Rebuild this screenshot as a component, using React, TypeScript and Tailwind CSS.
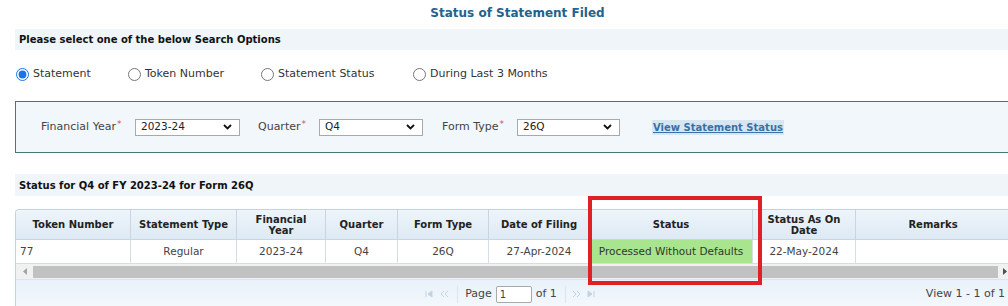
import React from "react";

function Radio({ label, checked = false, width }: { label: string; checked?: boolean; width: string }) {
  return (
    <label className={`flex items-center gap-[4px] ${width}`}>
      <input type="radio" name="opt" checked={checked} readOnly className="m-0 w-[13px] h-[13px] accent-[#1a73e8]" />
      <span className="text-[11px] text-[#333]">{label}</span>
    </label>
  );
}

function Field({ label, value, labelW, selectW }: { label: string; value: string; labelW: string; selectW: string }) {
  return (
    <>
      <div className={`flex items-center ${labelW} text-[11px] text-[#444]`}>
        {label}
        <span className="text-[9px] text-[#e24a63] self-start -mt-[1px] ml-[1px]">*</span>
      </div>
      <div className={`flex items-center justify-between ${selectW} h-[17px] border border-[#a9a9a9] bg-white pl-[5px] pr-[7px] text-[10.5px] text-[#222]`}>
        {value}
        <svg width="9" height="6" viewBox="0 0 9 6">
          <path d="M1 1 L4.5 4.5 L8 1" fill="none" stroke="#111" strokeWidth="1.8" />
        </svg>
      </div>
    </>
  );
}

const cols = "grid grid-cols-[115px_106px_89px_72px_91px_101px_163px_103px_1fr]";

const headers = ["Token Number", "Statement Type", "Financial\nYear", "Quarter", "Form Type", "Date of Filing", "Status", "Status As On\nDate", "Remarks"];

function PagerIcon({ kind }: { kind: "first" | "prev" | "next" | "last" }) {
  const d = {
    first: "M1 1 V7 M7 1 L3 4 L7 7 Z",
    prev: "M4 1 L1 4 L4 7 M8 1 L5 4 L8 7",
    next: "M1 1 L4 4 L1 7 M5 1 L8 4 L5 7",
    last: "M7 1 V7 M1 1 L5 4 L1 7 Z",
  }[kind];
  return (
    <svg width="9" height="8" viewBox="0 0 9 8">
      <path d={d} fill={kind === "first" || kind === "last" ? "#c3d2e0" : "none"} stroke="#c3d2e0" strokeWidth="1" />
    </svg>
  );
}

export default function App() {
  return (
    <div className="relative w-[1008px] h-[306px] overflow-hidden bg-white font-['DejaVu_Sans',sans-serif] text-[#333]">
      <div className="ml-[15px] w-[1005px]">
        <div className="h-[29px] pb-[4px] flex items-center justify-center text-[12px] font-bold text-[#23628d]">
          Status of Statement Filed
        </div>
        <div className="h-[21px] bg-[#eff5f8] pl-[4px] flex items-center text-[10px] font-bold text-[#111]">
          Please select one of the below Search Options
        </div>
        <div className="h-[51px] pb-[3px] pl-[1px] flex items-center">
          <Radio label="Statement" checked width="w-[112px]" />
          <Radio label="Token Number" width="w-[133px]" />
          <Radio label="Statement Status" width="w-[152px]" />
          <Radio label="During Last 3 Months" width="w-[200px]" />
        </div>
        <div className="h-[52px] border border-[#47777b] bg-[#f1f7fa] flex items-center pl-[25px]">
          <Field label="Financial Year" value="2023-24" labelW="w-[94px]" selectW="w-[105px]" />
          <div className="w-[18px]" />
          <Field label="Quarter" value="Q4" labelW="w-[61px]" selectW="w-[104px]" />
          <div className="w-[19px]" />
          <Field label="Form Type" value="26Q" labelW="w-[75px]" selectW="w-[103px]" />
          <a className="ml-[32px] bg-[#d6e7f3] px-[1px] text-[10px] font-bold text-[#3b6fa6] underline leading-[15px]">
            View Statement Status
          </a>
        </div>
        <div className="mt-[21px] h-[22px] bg-[#eff5f8] pl-[4px] flex items-center text-[10px] font-bold text-[#111]">
          Status for Q4 of FY 2023-24 for Form 26Q
        </div>

        <div className="mt-[13px] w-[996px] border-l border-t border-[#c4d3e0] rounded-tl-[4px] overflow-hidden">
          <div className={`${cols} h-[30px] bg-gradient-to-b from-[#eef5fb] to-[#dde9f4]`}>
            {headers.map((h) => (
              <div
                key={h}
                className="flex items-center justify-center border-r border-b border-[#c9d6e2] text-center whitespace-pre-line text-[10px] leading-[11px] font-bold text-[#222]"
              >
                {h}
              </div>
            ))}
          </div>
          <div className={`${cols} h-[24px] bg-white text-[10.5px] text-[#444]`}>
            <div className="flex items-center pl-[4px] border-r border-b border-[#d3dee8]">77</div>
            <div className="flex items-center justify-center border-r border-b border-[#d3dee8]">Regular</div>
            <div className="flex items-center justify-center border-r border-b border-[#d3dee8]">2023-24</div>
            <div className="flex items-center justify-center border-r border-b border-[#d3dee8]">Q4</div>
            <div className="flex items-center justify-center border-r border-b border-[#d3dee8]">26Q</div>
            <div className="flex items-center justify-center border-r border-b border-[#d3dee8]">27-Apr-2024</div>
            <div className="flex items-center justify-center border-r border-b border-[#d3dee8] bg-[#a9e48e] text-[#2c3a2a]">
              Processed Without Defaults
            </div>
            <div className="flex items-center justify-center border-r border-b border-[#d3dee8]">22-May-2024</div>
            <div className="border-b border-[#d3dee8]" />
          </div>
          <div className="h-[15px] bg-[#f1f1f1] flex items-center">
            <div className="w-[17px] flex justify-center">
              <svg width="4" height="7" viewBox="0 0 4 7"><path d="M4 0 L0 3.5 L4 7 Z" fill="#a3a3a3" /></svg>
            </div>
            <div className="h-[12px] flex-1 bg-[#c1c1c1]" />
            <div className="w-[13px] flex justify-center">
              <svg width="4" height="7" viewBox="0 0 4 7"><path d="M0 0 L4 3.5 L0 7 Z" fill="#505050" /></svg>
            </div>
          </div>
          <div className="h-[29px] bg-gradient-to-b from-[#e9f2fa] to-[#f3f8fc] border-t border-[#dbe5ee] flex items-center text-[11px] text-[#444]">
            <div className="flex-1" />
            <div className="flex items-center">
              <div className="flex items-center gap-[6px] pr-[8px] border-r border-[#dbe5ee] h-[17px]">
                <PagerIcon kind="first" />
                <PagerIcon kind="prev" />
              </div>
              <span className="ml-[7px]">Page</span>
              <div className="ml-[4px] w-[36px] h-[17px] border border-[#a9a9a9] rounded-[2px] bg-white pl-[3px] text-[10px] leading-[15px]">
                1
              </div>
              <span className="ml-[4px]">of 1</span>
              <div className="ml-[8px] flex items-center gap-[6px] pl-[6px] border-l border-[#dbe5ee] h-[17px]">
                <PagerIcon kind="next" />
                <PagerIcon kind="last" />
              </div>
            </div>
            <div className="flex-1 flex justify-end pr-[6px]">View 1 - 1 of 1</div>
          </div>
        </div>
      </div>
      <div className="absolute left-[588px] top-[196px] w-[174px] h-[89px] border-4 border-[#df2027]" />
    </div>
  );
}
